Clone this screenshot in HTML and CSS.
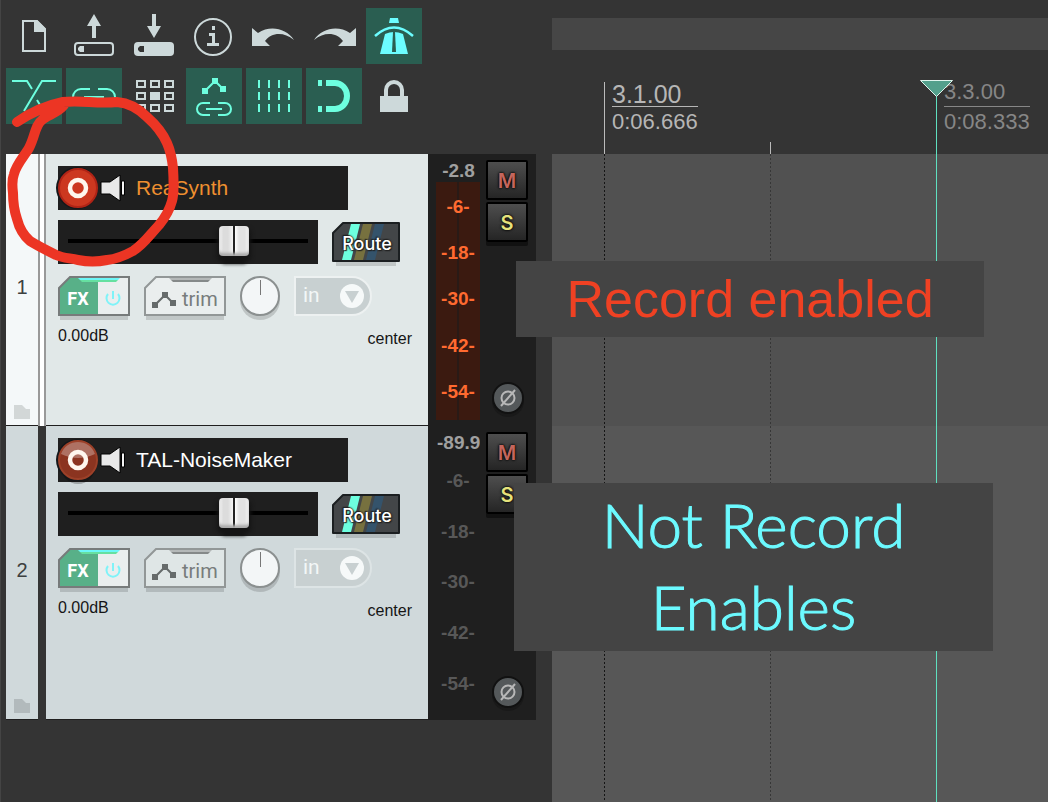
FILE: index.html
```
<!DOCTYPE html>
<html lang="en">
<head>
<meta charset="utf-8">
<meta name="viewport" content="width=device-width, initial-scale=1">
<title>Track recording</title>
<link rel="stylesheet" href="styles.css">
</head>
<body>
<svg class="defs" aria-hidden="true">
  <symbol id="rec" viewBox="0 0 42 46">
    <ellipse class="rec-shadow" cx="22" cy="26" rx="18" ry="20"/>
    <circle cx="21" cy="22" r="21" fill="#14171a"/>
    <circle class="rec-face" cx="22" cy="22" r="19"/>
    <path class="rec-gloss" d="M5 16a18 18 0 0 1 34 0q-17 8-34 0z"/>
    <circle cx="22" cy="22" r="8" fill="none" stroke="#fff7ee" stroke-width="4.5"/>
  </symbol>
  <symbol id="speaker" viewBox="0 0 26 28">
    <path d="M1 8h9L20 1v26l-10-7H1z" fill="#e8e8e8" stroke="#000"/>
    <path d="M21.500 7h3v14h-3z" fill="#f4f4f4" stroke="#000"/>
  </symbol>
  <symbol id="fx" viewBox="0 0 72 44">
    <path d="M2 40h68v4H2z" fill="#000" opacity=".14"/>
    <path d="M1 12 12 1h59v38H1z" fill="#eaeeee"/>
    <path d="M1 12 12 1h28v38H1z" fill="#58b088"/>
    <path d="M1 12 12 1h59v38H1z" fill="none" stroke="#777b7b" stroke-width="2"/>
    <path d="M20 2h42l-2 2H22z" fill="#6cf7f7"/><path d="M22 4h38l-2 2H24z" fill="#66e0a0"/>
    <path d="M50 18a6.500 6.500 0 1 0 10 0M55 15v8" fill="none" stroke="#7ff3f8" stroke-width="2"/>
  </symbol>
  <symbol id="trim" viewBox="0 0 82 44">
    <path d="M2 40h78v4H2z" fill="#000" opacity=".14"/>
    <path class="trim-face" d="M1 12 12 1h69v38H1z" stroke="#929797" stroke-width="2"/>
    <path d="M25 2h43l-2 2H27z" fill="#b4b8b8"/><path d="M27 4h39l-2 2H29z" fill="#858989"/>
    <path d="m11 29 10-10 8 8" fill="none" stroke="#666b6b" stroke-width="2"/>
    <path d="M8 26h6v6H8zM18 16h6v6h-6zM26 24h6v6h-6z" fill="#666b6b"/>
  </symbol>
  <symbol id="route" viewBox="0 0 68 44">
    <path d="M4 40h60v4H4z" fill="#000" opacity=".14"/>
    <path d="M1 11 11 1h56v38H1z" fill="#434648"/>
    <path d="M19 2h9l-9 36h-9z" fill="#6dffdf"/><path d="M31 2h9l-9 36h-9z" fill="#77713f"/><path d="M43 2h9l-9 36h-9z" fill="#34536b"/>
    <path d="M1 11 11 1h56v38H1z" fill="none" stroke="#1b1f21" stroke-width="2" stroke-linejoin="round"/>
  </symbol>
  <symbol id="arrow" viewBox="0 0 24 24">
    <circle class="arrow-disc" cx="12" cy="12" r="12"/><path d="M5 7h14l-7 12z" fill="#c8d0d1"/>
  </symbol>
  <symbol id="folder" viewBox="0 0 16 14"><path d="M0 0h8l4 4h4v10H0z" fill="currentColor"/></symbol>
  <symbol id="phase" viewBox="0 0 32 36">
    <circle cx="16" cy="19" r="16" fill="#191919"/>
    <circle cx="16" cy="16" r="15" fill="#54585a" stroke="#111" stroke-width="2"/>
    <circle cx="16" cy="16" r="6.500" fill="none" stroke="#b8b8b8" stroke-width="2"/>
    <path d="m9 24 14-16" stroke="#b8b8b8" stroke-width="2"/>
  </symbol>
</svg>

<div class="app">
  <section class="mixer">
    <nav class="toolbar" aria-label="Main toolbar">
      <button class="tool" aria-label="New project"><svg viewBox="0 0 56 56"><path d="M17 13h14l8 8v22H17z" fill="none" stroke="currentColor" stroke-width="2"/><path d="M28 12h3l9 9v3H28z" fill="currentColor"/></svg></button>
      <button class="tool" aria-label="Open project"><svg viewBox="0 0 56 56"><path d="m28 6 7 12h-5v12h-4V18h-5z" fill="currentColor"/><rect x="9" y="35" width="38" height="12" rx="3" fill="none" stroke="currentColor" stroke-width="2"/><path d="M18 38v6h-4l-2-2v-2l2-2z" fill="currentColor"/></svg></button>
      <button class="tool" aria-label="Save project"><svg viewBox="0 0 56 56"><path d="M26 6h4v12h5l-7 12-7-12h5z" fill="currentColor"/><rect x="8" y="34" width="40" height="14" rx="4" fill="currentColor"/><path d="M18 38v6h-4l-2-2v-2l2-2z" fill="#343434"/></svg></button>
      <button class="tool" aria-label="Project settings"><svg viewBox="0 0 56 56"><circle cx="27" cy="29" r="18" fill="none" stroke="currentColor" stroke-width="2"/><path d="M26 18h3v4h-3zM23 25h6v10h4v3H21v-3h5v-7h-3z" fill="currentColor"/></svg></button>
      <button class="tool" aria-label="Undo"><svg viewBox="0 0 56 56"><path d="M6 20v18h18l-5-5c6-8 18-10 29-1-8-12-24-15-36-7z" fill="currentColor"/></svg></button>
      <button class="tool" aria-label="Redo"><svg viewBox="0 0 56 56"><path d="M50 20v18H32l5-5c-6-8-18-10-29-1 8-12 24-15 36-7z" fill="currentColor"/></svg></button>
      <button class="tool on cyan" aria-label="Metronome"><svg viewBox="0 0 56 56"><path d="M24 10h8l1 5H23z" fill="currentColor"/><path d="M9 28q19-17 38 0" fill="none" stroke="currentColor" stroke-width="2.500"/><path d="M19 26q9-4 18 0l5 20H14z" fill="currentColor"/><path d="M27 24h2l1 20h-4z" fill="#2a5e51"/></svg></button>
      <i class="row-break"></i>
      <button class="tool on" aria-label="Auto crossfade"><svg viewBox="0 0 56 56"><path d="M6 13h15l5 8M31 32l6 10M50 13H36L18 43" fill="none" stroke="currentColor" stroke-width="2"/></svg></button>
      <button class="tool on" aria-label="Item grouping"><svg viewBox="0 0 56 56"><path d="M24 21h-9a8 8 0 0 0 0 16h9M32 21h9a8 8 0 0 1 0 16h-9M18 29h20" fill="none" stroke="currentColor" stroke-width="2"/></svg></button>
      <button class="tool" aria-label="Ripple editing"><svg viewBox="0 0 56 56"><path d="M11 13h8v6h-8zM25 13h8v6h-8zM39 13h8v6h-8zM11 25h8v6h-8zM39 25h8v6h-8zM11 37h8v6h-8zM25 37h8v6h-8zM39 37h8v6h-8z" fill="none" stroke="currentColor" stroke-width="2"/><path d="M24 24h10v8H24z" fill="currentColor"/></svg></button>
      <button class="tool on" aria-label="Move envelopes with items"><svg viewBox="0 0 56 56"><path d="m19 23 10-10 8 8M24 35h-7a6 6 0 0 0 0 12h7M32 35h7a6 6 0 0 1 0 12h-7M20 41h16" fill="none" stroke="currentColor" stroke-width="2"/><path d="M16 20h6v6h-6zM26 10h6v6h-6zM34 18h6v6h-6z" fill="currentColor"/></svg></button>
      <button class="tool on" aria-label="Grid lines"><svg viewBox="0 0 56 56"><path d="M13 12v32M23 12v32M33 12v32M43 12v32" fill="none" stroke="currentColor" stroke-width="2" stroke-dasharray="8 4"/></svg></button>
      <button class="tool on" aria-label="Snap"><svg viewBox="0 0 56 56"><path d="M20 15h9a12 13 0 0 1 0 26h-9" fill="none" stroke="currentColor" stroke-width="6"/><path d="M12 12h4v6h-4zM12 38h4v6h-4z" fill="currentColor"/></svg></button>
      <button class="tool" aria-label="Lock"><svg viewBox="0 0 56 56"><path d="M20 29v-7a8 8 0 0 1 16 0v7" fill="none" stroke="currentColor" stroke-width="4"/><path d="M14 28h28v16H14z" fill="currentColor"/></svg></button>
    </nav>

    <article class="track armed">
      <div class="index"><span class="number">1</span><svg class="folder"><use href="#folder"/></svg></div>
      <div class="edge"></div>
      <div class="panel">
        <div class="name-bar">
          <button class="rec" aria-label="Record arm" aria-pressed="true"><svg><use href="#rec"/></svg></button>
          <button class="monitor" aria-label="Input monitoring"><svg><use href="#speaker"/></svg></button>
          <span class="name">ReaSynth</span>
        </div>
        <div class="row">
          <div class="fader"><input type="range" min="0" max="100" value="72" aria-label="Volume"></div>
          <button class="shaped route"><svg><use href="#route"/></svg><span>Route</span></button>
        </div>
        <div class="row">
          <button class="shaped fx"><svg><use href="#fx"/></svg><span>FX</span></button>
          <button class="shaped trim"><svg><use href="#trim"/></svg><span>trim</span></button>
          <button class="knob" aria-label="Pan"></button>
          <div class="input-pick"><select aria-label="Record input"><option>in</option></select><svg><use href="#arrow"/></svg></div>
        </div>
        <div class="values"><span>0.00dB</span><span class="pan">center</span></div>
      </div>
      <div class="meter">
        <div class="levels"><div class="peak">-2.8</div><div class="scale"><span>-6-</span><span>-18-</span><span>-30-</span><span>-42-</span><span>-54-</span></div></div>
        <div class="switches"><button class="mute">M</button><button class="solo">S</button><button class="phase" aria-label="Invert phase"><svg><use href="#phase"/></svg></button></div>
      </div>
    </article>

    <article class="track tall">
      <div class="index"><span class="number">2</span><svg class="folder"><use href="#folder"/></svg></div>
      <div class="edge"></div>
      <div class="panel">
        <div class="name-bar">
          <button class="rec" aria-label="Record arm" aria-pressed="false"><svg><use href="#rec"/></svg></button>
          <button class="monitor" aria-label="Input monitoring"><svg><use href="#speaker"/></svg></button>
          <span class="name">TAL-NoiseMaker</span>
        </div>
        <div class="row">
          <div class="fader"><input type="range" min="0" max="100" value="72" aria-label="Volume"></div>
          <button class="shaped route"><svg><use href="#route"/></svg><span>Route</span></button>
        </div>
        <div class="row">
          <button class="shaped fx"><svg><use href="#fx"/></svg><span>FX</span></button>
          <button class="shaped trim"><svg><use href="#trim"/></svg><span>trim</span></button>
          <button class="knob" aria-label="Pan"></button>
          <div class="input-pick"><select aria-label="Record input"><option>in</option></select><svg><use href="#arrow"/></svg></div>
        </div>
        <div class="values"><span>0.00dB</span><span class="pan">center</span></div>
      </div>
      <div class="meter">
        <div class="levels"><div class="peak">-89.9</div><div class="scale"><span>-6-</span><span>-18-</span><span>-30-</span><span>-42-</span><span>-54-</span></div></div>
        <div class="switches"><button class="mute">M</button><button class="solo">S</button><button class="phase" aria-label="Invert phase"><svg><use href="#phase"/></svg></button></div>
      </div>
    </article>
  </section>

  <section class="timeline" aria-label="Timeline">
    <div class="overview"></div>
    <div class="ruler">
      <div class="mark at-31"><div class="stamp"><b>3.1.00</b><span>0:06.666</span></div></div>
      <div class="mark minor at-32"></div>
      <div class="mark plain at-33"><div class="stamp dim"><b>3.3.00</b><span>0:08.333</span></div></div>
    </div>
    <div class="lanes">
      <div class="lane"></div>
      <div class="lane light"></div>
      <i class="beat at-31"></i>
      <i class="beat soft at-32"></i>
    </div>
    <div class="playhead at-33"><svg viewBox="0 0 33 17"><path d="M.5.500h32L16.500 16.500z" fill="#53a08c" stroke="#dff5ee"/></svg></div>
  </section>

  <p class="callout red">Record enabled</p>
  <p class="callout blue">Not Record Enables</p>
  <svg class="scribble" viewBox="0 0 190 190" aria-hidden="true"><path d="M17 42C30 33 44 26 63 22C82 20 96 24 117 22C130 23 139 29 147 37C155 44 163 54 167 63C171 72 172 78 173 88C174 104 174 114 172 121C169 132 164 139 159 145C149 156 143 165 133 171C124 176 116 179 107 180C97 182 88 182 78 180C69 178 63 178 56 175C46 170 38 166 30 161C23 155 19 147 17 139C14 130 13 122 13 113C12 105 12 99 14 94C16 85 25 75 29 68C35 57 35 45 42 40C47 35 58 33 64 25"/></svg>
</div>
</body>
</html>
```
FILE: styles.css
```
* { box-sizing: border-box; }
body {
  margin: 0;
  background: #343434;
  font-family: "Liberation Sans", Arial, sans-serif;
}
button { border: 0; padding: 0; background: none; color: inherit; font: inherit; display: block; }
svg { display: block; }
.defs { position: absolute; width: 0; height: 0; }

.app {
  position: relative;
  display: grid;
  grid-template-columns: 552px 1fr;
  min-height: 100vh;
  overflow: hidden;
}
.mixer { padding: 8px 16px 0 5px; border-left: 1px solid #444; }

/* Toolbar */
.toolbar { display: flex; flex-wrap: wrap; gap: 4px; margin-bottom: 30px; }
.row-break { width: 60px; }
.tool { width: 56px; height: 56px; color: #cdd9da; }
.tool svg { width: 56px; height: 56px; }
.tool.on { background: #2a5e51; color: #6dffdf; }
.tool.cyan { color: #6cfdff; }

/* Tracks */
.track {
  --rec-face: #8b3420;
  --rec-rim: #9c4028;
  --rec-gloss: .3;
  --rec-shadow: .25;
  --trim-face: #dfe6e6;
  display: grid;
  grid-template-columns: 32px 8px 1fr 108px;
  min-height: 272px;
  background: #1f1f1f;
}
.track.armed {
  --rec-face: #cc3820;
  --rec-rim: #b02416;
  --rec-gloss: 0;
  --rec-shadow: 0;
  --trim-face: #eaeeee;
}
.track.tall { min-height: 294px; }
.index {
  display: grid;
  grid-template-rows: 1fr auto 1fr;
  justify-items: center;
  padding-bottom: 6px;
  background: #d0d9db;
  border-bottom: 1px solid #1f1f1f;
  color: #b2babc;
}
.number { grid-row: 2; color: #3c4040; font-size: 20px; line-height: 24px; }
.folder { grid-row: 3; width: 16px; height: 14px; align-self: end; }
.edge { background: #343434; }
.panel {
  padding: 12px 16px 0 12px;
  background: #d0d9db;
  border-bottom: 1px solid #1f1f1f;
}
.armed .index { background: #f4f8f9; color: #d2d7d7; }
.armed .edge { background: #fff; border: solid #999; border-width: 0 2px; }
.armed .panel { background: #e1e8e8; }

.name-bar {
  display: flex;
  align-items: center;
  width: 290px;
  height: 44px;
  margin-bottom: 10px;
  background: #1f1f1f;
  color: #fff;
}
.rec { width: 42px; height: 46px; margin: 2px 2px 0 -2px; }
.rec svg { width: 42px; height: 46px; }
.rec-face { fill: var(--rec-face); stroke: var(--rec-rim); stroke-width: 2; }
.rec-gloss { fill: #fff; opacity: var(--rec-gloss); }
.rec-shadow { fill: #000; opacity: var(--rec-shadow); }
.monitor svg { width: 26px; height: 28px; }
.name { margin-left: 10px; font-size: 21px; }
.armed .name { color: #ee8f30; }

.row { display: flex; align-items: center; gap: 14px; margin-bottom: 12px; }
.fader { width: 260px; height: 44px; padding: 0 10px; background: #1f1f1f; }
.fader input {
  appearance: none;
  display: block;
  width: 100%;
  height: 42px;
  margin: 0;
  background: linear-gradient(#000, #000) center / 100% 4px no-repeat;
}
.fader input::-webkit-slider-thumb {
  appearance: none;
  width: 30px;
  height: 30px;
  border-radius: 4px;
  background:
    linear-gradient(90deg, transparent 14px, #222 14px 16px, transparent 16px),
    linear-gradient(90deg, #fff, #dcdcdc 4px 9px, #f4f4f4 14px, #fff 16px, #e2e2e2 20px 26px, #fff);
  box-shadow: inset 0 -3px 3px #aaa, 0 4px 4px 2px #151515, 0 13px 3px -4px rgba(0, 0, 0, .3);
}

.shaped { position: relative; height: 40px; }
.shaped svg { position: absolute; top: 0; left: 0; width: 100%; height: 44px; }
.shaped span { position: relative; display: block; line-height: 40px; }
.route { width: 68px; }
.route span {
  padding-top: 2px;
  padding-left: 2px;
  color: #fff;
  font: 500 18px/40px Inter, sans-serif;
  text-shadow: 0 0 2px #222, 0 0 2px #222, 1px 1px 1px #222, -1px -1px 1px #222;
}
.fx { width: 72px; }
.fx span { width: 40px; padding: 2px 0 0; color: #fff; font: 700 18px/42px Roboto, sans-serif; }
.trim { width: 82px; }
.trim span { padding: 2px 0 0 38px; color: #777c7c; font: 400 20px/42px Roboto, sans-serif; text-align: left; }
.trim-face { fill: var(--trim-face); }
.knob {
  width: 40px;
  height: 40px;
  border: 2px solid #8b9090;
  border-radius: 50%;
  background: linear-gradient(#777, #777) center 2px / 1px 15px no-repeat, #f3f6f7;
  box-shadow: 0 4px 0 rgba(0, 0, 0, .15);
}
.input-pick { position: relative; }
.input-pick select {
  appearance: none;
  display: block;
  width: 78px;
  height: 40px;
  padding: 0 0 2px 7px;
  border: 2px solid #dde4e5;
  border-radius: 0 20px 20px 0;
  background: #c8d0d1;
  color: #f3f7f7;
  font: 400 21px Roboto, sans-serif;
}
.armed .input-pick select { border-color: #edf1f1; }
.input-pick svg { position: absolute; top: 8px; right: 8px; width: 24px; height: 24px; pointer-events: none; }
.arrow-disc { fill: #f6f9f9; }
.values { display: flex; justify-content: space-between; color: #151515; font-size: 16px; line-height: 16px; }
.pan { margin-top: 3px; }

/* Meters */
.meter { display: flex; justify-content: space-between; padding: 0 8px; }
.levels {
  display: flex;
  flex-direction: column;
  width: 44px;
  padding-bottom: 6px;
  font-size: 19px;
  font-weight: 700;
  text-align: center;
}
.peak { height: 28px; padding: 2px 0 0 1px; overflow: hidden; color: #a0a0a0; line-height: 30px; }
.scale {
  flex: 1;
  display: flex;
  flex-direction: column;
  justify-content: space-around;
  padding: 2px 0 5px;
  color: #585858;
  line-height: 20px;
}
.armed .scale {
  background: linear-gradient(90deg, #3b1a10 21px, #291a16 21px 23px, #3b1a10 23px);
  color: #ff6a30;
}
.switches { display: flex; flex-direction: column; align-items: center; gap: 2px; padding: 6px 0 8px; }
.mute, .solo {
  width: 42px;
  height: 40px;
  border: 2px solid #000;
  border-radius: 2px;
  background: linear-gradient(#4e4e4e, #252525);
  font: 600 20px/38px Inter, sans-serif;
  text-shadow: 0 0 3px #000, 0 0 2px #000;
}
.mute { color: #c4665d; }
.solo { color: #e6e27c; box-shadow: 0 4px 0 #111; }
.phase { margin-top: auto; padding-left: 2px; }
.phase svg { width: 32px; height: 36px; }

/* Timeline */
.timeline { position: relative; display: flex; flex-direction: column; }
.overview { height: 32px; margin-top: 18px; background: #464646; }
.ruler { position: relative; height: 104px; }
.at-31 { left: 52px; }
.at-32 { left: 218px; }
.at-33 { left: 384px; }
.mark { position: absolute; bottom: 0; height: 72px; border-left: 1px solid #bbb; }
.mark.minor { height: 12px; }
.mark.plain { border-color: transparent; }
.stamp { margin-left: 7px; color: #b6b6b6; font-size: 22px; }
.stamp b { display: block; border-bottom: 1px solid #b6b6b6; font-size: 25px; font-weight: 400; line-height: 24px; }
.stamp span { display: block; line-height: 30px; }
.stamp.dim { color: #868686; }
.stamp.dim b { padding-bottom: 4px; border-color: #868686; font-size: 22px; line-height: 20px; }
.lanes { position: relative; flex: 1; display: flex; flex-direction: column; }
.lane { height: 272px; background: #515151; }
.lane.light { flex: 1; height: auto; background: #575757; }
.beat {
  position: absolute;
  top: 0;
  bottom: 0;
  width: 1px;
  background: repeating-linear-gradient(#151515 0 2px, transparent 2px 4px);
}
.beat.soft { background: repeating-linear-gradient(#363636 0 2px, transparent 2px 4px); }
.playhead { position: absolute; top: 80px; bottom: 0; width: 1px; background: #5fe0c0; }
.playhead svg { width: 33px; height: 17px; margin-left: -16px; }

/* Annotations */
.callout { position: absolute; margin: 0; background: #444; text-align: center; }
.callout.red {
  top: 261px;
  left: 516px;
  width: 468px;
  color: #ef4123;
  font-size: 52px;
  line-height: 76px;
  white-space: nowrap;
}
.callout.blue {
  top: 483px;
  left: 514px;
  width: 479px;
  padding: 0 60px 4px;
  color: #6cfaff;
  font: 300 62px/82px Lato, sans-serif;
  -webkit-text-stroke: 1px #6cfaff;
}
.scribble { position: absolute; top: 80px; left: 0; width: 190px; height: 190px; pointer-events: none; }
.scribble path { fill: none; stroke: #ec3524; stroke-width: 10; stroke-linecap: round; stroke-linejoin: round; }
```
